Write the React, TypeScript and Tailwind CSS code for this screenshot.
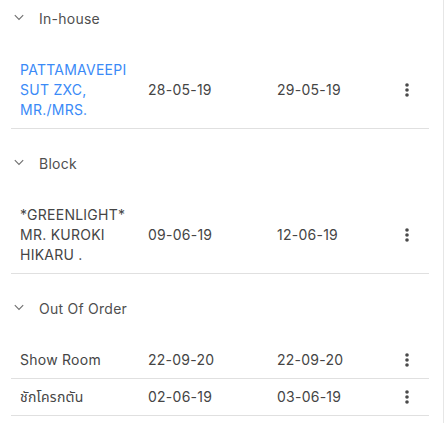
import React from 'react';

type Booking = {
  name: string;
  arrival: string;
  departure: string;
  link?: boolean;
};

type Section = {
  title: string;
  rows: Booking[];
};

const sections: Section[] = [
  {
    title: 'In-house',
    rows: [{ name: 'PATTAMAVEEPISUT ZXC, MR./MRS.', arrival: '28-05-19', departure: '29-05-19', link: true }],
  },
  {
    title: 'Block',
    rows: [{ name: '*GREENLIGHT* MR. KUROKI HIKARU .', arrival: '09-06-19', departure: '12-06-19' }],
  },
  {
    title: 'Out Of Order',
    rows: [
      { name: 'Show Room', arrival: '22-09-20', departure: '22-09-20' },
      { name: 'ชักโครกตัน', arrival: '02-06-19', departure: '03-06-19' },
    ],
  },
];

const Chevron = () => (
  <svg width="10" height="10" viewBox="0 0 10 10" className="shrink-0 -mt-[2px]">
    <path d="M0.8 2.2 L5 6.4 L9.2 2.2" fill="none" stroke="#6f6f6f" strokeWidth="1.1" />
  </svg>
);

const Kebab = () => (
  <svg width="4" height="14" viewBox="0 0 4 14">
    <circle cx="2" cy="2" r="1.8" fill="#4a4a4a" />
    <circle cx="2" cy="7" r="1.8" fill="#4a4a4a" />
    <circle cx="2" cy="12" r="1.8" fill="#4a4a4a" />
  </svg>
);

export default function App() {
  return (
    <div
      className="w-[444px] h-[423px] overflow-hidden bg-white border-r border-[#e6e6e6] text-[14px] tracking-[0.25px] text-[#454545]"
      style={{ fontFamily: 'Inter, "Noto Sans Thai", "Noto Sans", sans-serif' }}
    >
      <div className="pl-[11px] pr-[14px]">
        {sections.map((section, i) => (
          <div key={section.title} className={i > 0 ? 'mt-4' : ''}>
            <div className="h-[37px] flex items-center pl-[3px] mb-[15px]">
              <Chevron />
              <span className="ml-[15px] leading-5 text-[#4f4f4f]">{section.title}</span>
            </div>
            {section.rows.map((row) => (
              <div
                key={row.name}
                className="grid grid-cols-[128px_129px_1fr_24px] items-center pl-[9px] pr-[10px] py-2 border-b border-[#e0e0e0] leading-5"
              >
                <div className={`pr-5 break-words h-full overflow-hidden ${row.link ? 'text-[#3a8af7]' : ''}`}>
                  {row.name}
                </div>
                <div className="h-5">{row.arrival}</div>
                <div className="h-5">{row.departure}</div>
                <button className="h-5 w-6 flex items-center justify-center">
                  <Kebab />
                </button>
              </div>
            ))}
          </div>
        ))}
      </div>
    </div>
  );
}
